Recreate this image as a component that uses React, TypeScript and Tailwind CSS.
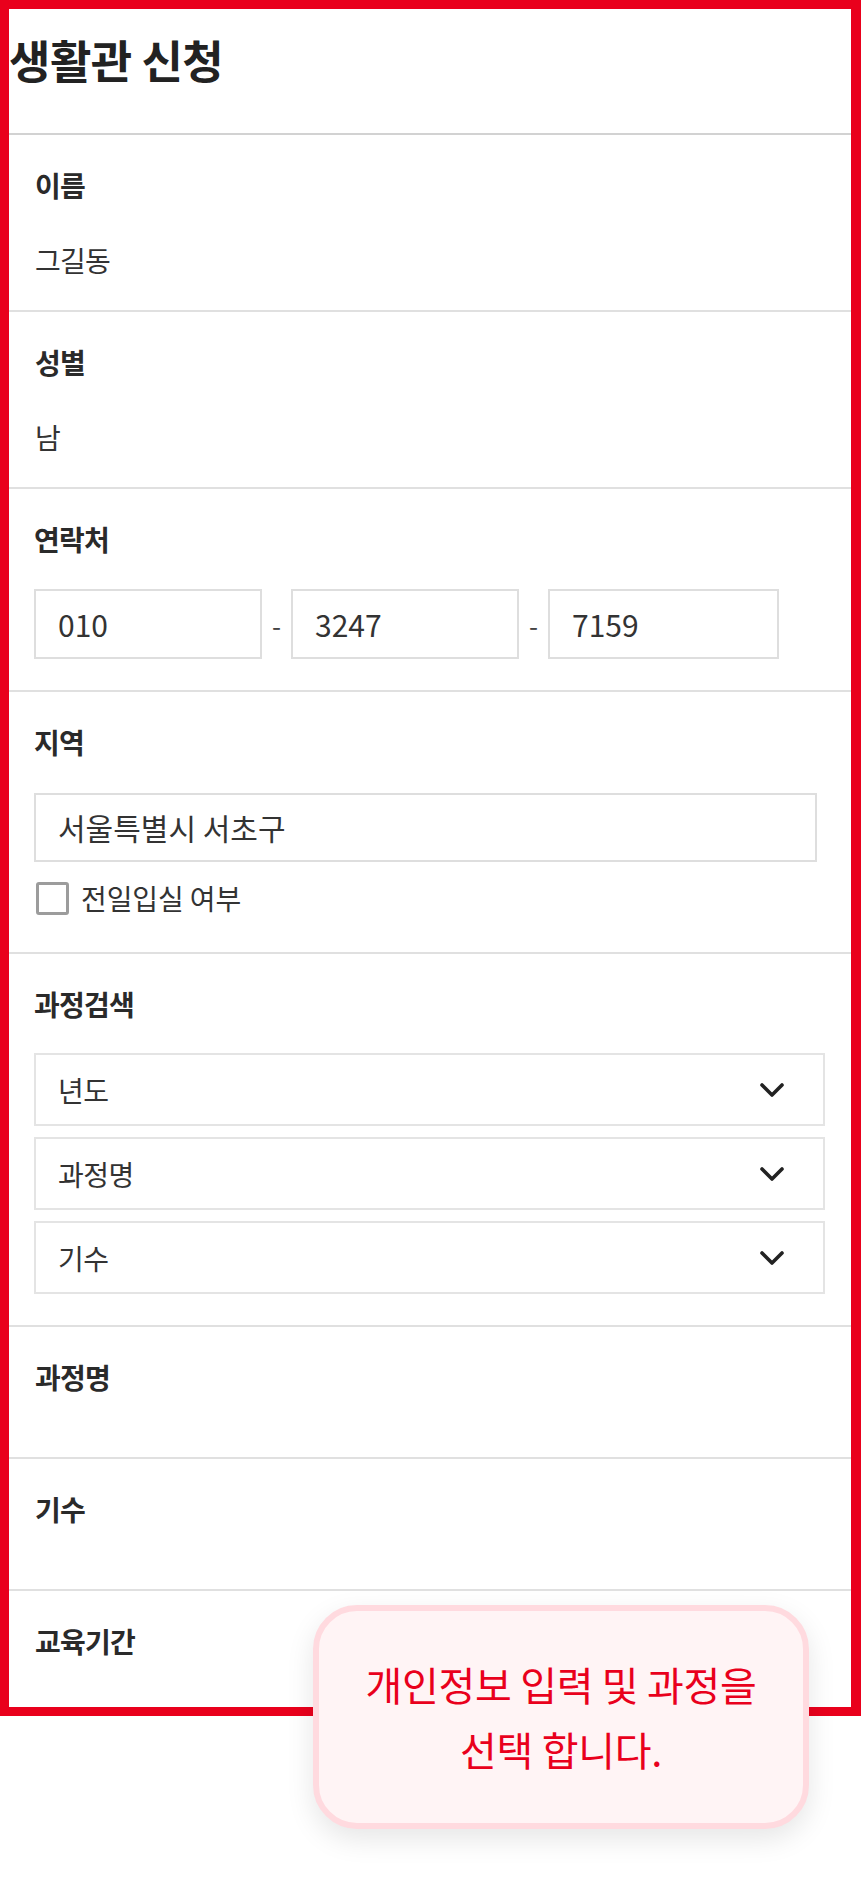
import React from "react";

const Chevron = () => (
  <svg width="24" height="16" viewBox="0 0 24 16" fill="none">
    <polyline points="2,3 12,13 22,3" stroke="#222" strokeWidth="3.6" strokeLinecap="round" strokeLinejoin="round" />
  </svg>
);

const Label = ({ children }: { children: React.ReactNode }) => (
  <div className="h-[40px] leading-[40px] text-[28px] font-bold tracking-[-0.8px] text-[#2a2a2a]">{children}</div>
);

const Value = ({ children }: { children: React.ReactNode }) => (
  <div className="h-[40px] leading-[40px] text-[28px] tracking-[-0.8px] text-[#333]">{children}</div>
);

const PhoneInput = ({ v, w }: { v: string; w: string }) => (
  <div className={`${w} h-[70px] border-2 border-[#dedede] flex items-center pl-[22px] text-[30px] text-[#333]`}>{v}</div>
);

const Select = ({ v }: { v: string }) => (
  <div className="w-[791px] h-[73px] border-2 border-[#e4e4e4] flex items-center justify-between pl-[22px] pr-[39px] text-[28px] tracking-[-0.5px] text-[#333]">
    <span>{v}</span>
    <Chevron />
  </div>
);

export default function App() {
  return (
    <div className="relative w-[861px] min-h-[1884px] bg-white font-['Noto_Sans_CJK_KR','Noto_Sans',sans-serif]">
      <div className="border-t-[9px] border-l-[9px] border-b-[9px] border-r-[10px] border-[#e9001c]">
        <div className="h-[126px] border-b-2 border-[#d2d2d2] pt-[26px]">
          <div className="h-[50px] leading-[50px] text-[45px] font-bold tracking-[-0.5px] text-[#222]">생활관 신청</div>
        </div>

        <div className="pl-[26px] border-b-2 border-[#e0e0e0] pt-[30px] pb-[30px]">
          <Label>이름</Label>
          <div className="mt-[35px]"><Value>그길동</Value></div>
        </div>

        <div className="pl-[26px] border-b-2 border-[#e0e0e0] pt-[30px] pb-[30px]">
          <Label>성별</Label>
          <div className="mt-[35px]"><Value>남</Value></div>
        </div>

        <div className="pl-[25px] border-b-2 border-[#e0e0e0] pt-[30px] pb-[31px]">
          <Label>연락처</Label>
          <div className="mt-[30px] flex items-center">
            <PhoneInput v="010" w="w-[228px]" />
            <span className="w-[29px] text-center text-[26px] text-[#444]">-</span>
            <PhoneInput v="3247" w="w-[228px]" />
            <span className="w-[29px] text-center text-[26px] text-[#444]">-</span>
            <PhoneInput v="7159" w="w-[231px]" />
          </div>
        </div>

        <div className="pl-[25px] border-b-2 border-[#e0e0e0] pt-[30px] pb-[34px]">
          <Label>지역</Label>
          <div className="mt-[31px] w-[783px] h-[69px] border-2 border-[#dedede] flex items-center pl-[22px] text-[30px] text-[#333]">서울특별시 서초구</div>
          <div className="mt-[16px] h-[40px] flex items-center gap-[12px]">
            <div className="w-[33px] h-[33px] border-[3px] border-[#9c9c9c] rounded-[3px] ml-[2px]" />
            <span className="text-[28px] tracking-[-0.1px] text-[#333] leading-[40px]">전일입실 여부</span>
          </div>
        </div>

        <div className="pl-[25px] border-b-2 border-[#e0e0e0] pt-[30px] pb-[31px]">
          <Label>과정검색</Label>
          <div className="mt-[29px] flex flex-col gap-[11px]">
            <Select v="년도" />
            <Select v="과정명" />
            <Select v="기수" />
          </div>
        </div>

        <div className="pl-[26px] border-b-2 border-[#e0e0e0] pt-[30px] pb-[60px]">
          <Label>과정명</Label>
        </div>

        <div className="pl-[26px] border-b-2 border-[#e0e0e0] pt-[30px] pb-[60px]">
          <Label>기수</Label>
        </div>

        <div className="pl-[26px] pt-[30px] pb-[46px]">
          <Label>교육기간</Label>
        </div>
      </div>

      <div className="absolute left-[313px] top-[1605px] w-[496px] h-[224px] rounded-[44px] border-[6px] border-[#ffdadf] bg-[#fff4f5] shadow-[0_10px_28px_rgba(0,0,0,0.10)] flex flex-col items-center justify-center text-[40px] leading-[65px] tracking-[-0.3px] text-[#e9001c]">
        <div>개인정보 입력 및 과정을</div>
        <div>선택 합니다.</div>
      </div>
    </div>
  );
}
